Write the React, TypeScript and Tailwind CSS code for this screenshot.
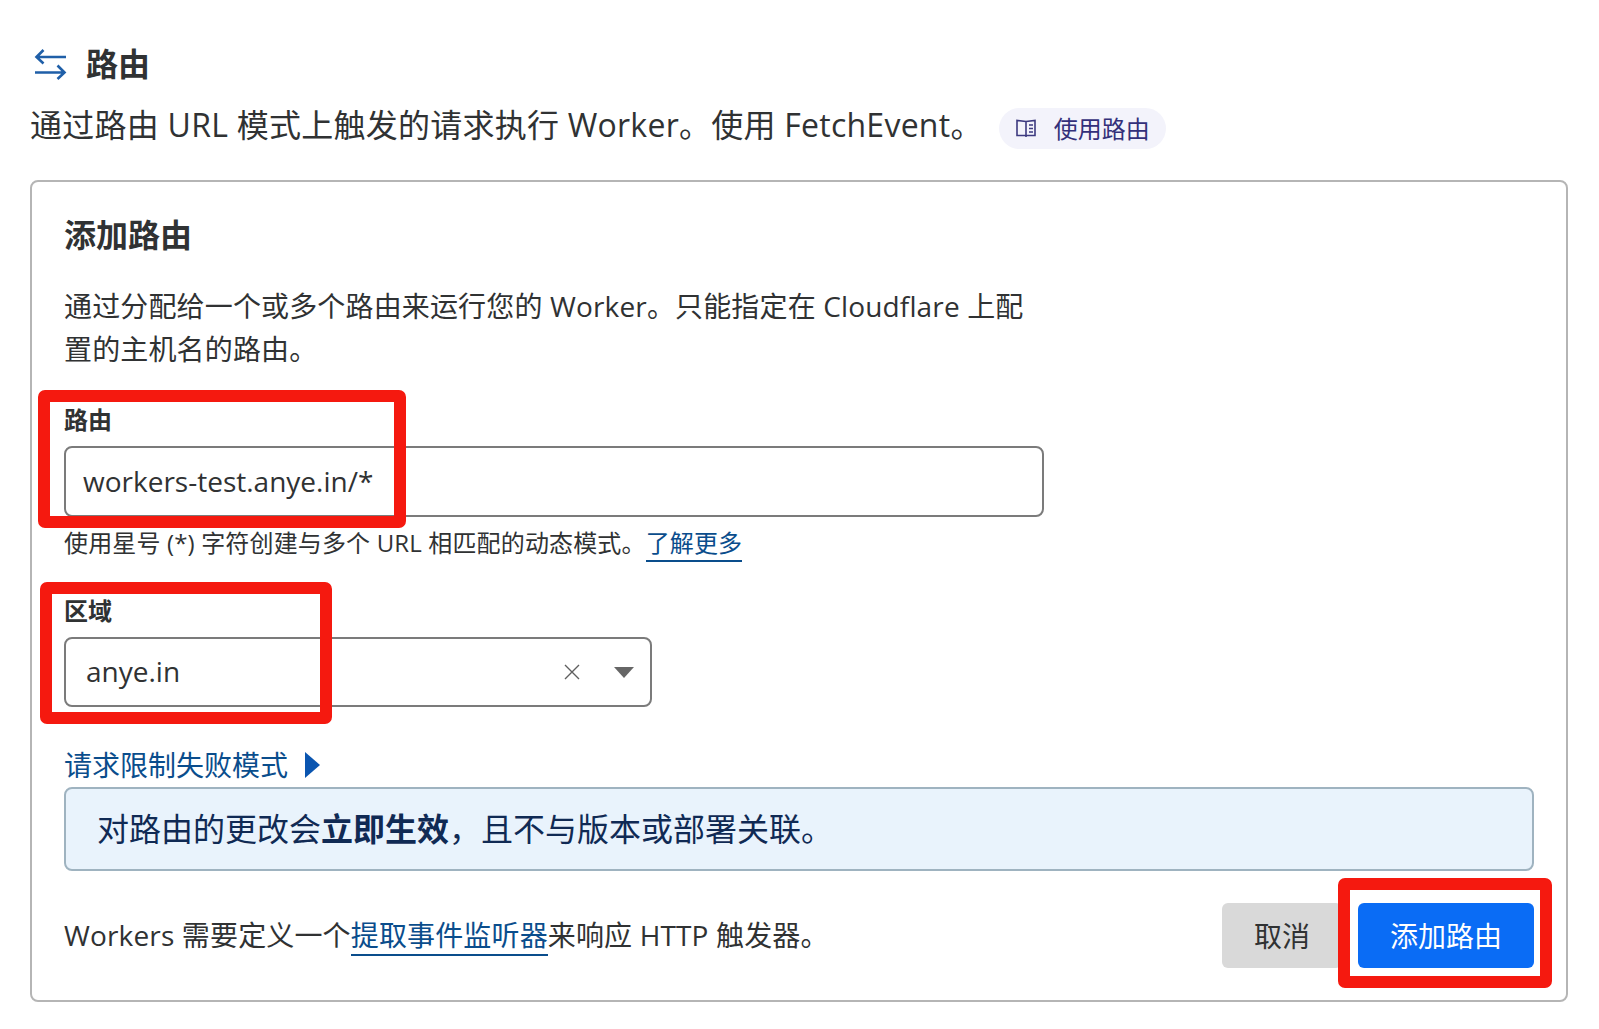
const FONT = 'font-["Open_Sans","Noto_Sans_CJK_SC",sans-serif]'

function RouteIcon() {
  return (
    <svg width="33" height="32" viewBox="0 0 33 32" fill="none" stroke="#1f5fa8" strokeWidth="2.6">
      <path d="M32 8H2.5M9.5 1L2.5 8L9.5 14.5" />
      <path d="M1 23.5H30.5M23.5 16.5L30.5 23.5L23.5 30" />
    </svg>
  )
}

function BookIcon() {
  return (
    <svg width="20" height="19" viewBox="0 0 20 19" fill="none" stroke="#3d3a80" strokeWidth="1.6">
      <path d="M10 2.5L1 1.5V16.5H10M10 2.5L19 1.5V16.5H10M10 2.5V18" />
      <path d="M13 6H17M13 9.5H17M13 13H17" />
    </svg>
  )
}

function Frame({ className }: { className: string }) {
  return <div className={`absolute rounded-[7px] border-[12px] border-[#f5190f] ${className}`} />
}

export default function App() {
  return (
    <main className={`relative h-[1029px] w-[1599px] overflow-hidden bg-white pt-[49px] pr-[31px] pl-[30px] text-[#303233] ${FONT}`}>
      <div className="flex h-[32px] items-center gap-[19px] pl-[4px]">
        <RouteIcon />
        <h2 className="pb-[2px] text-[32px] leading-[32px] font-bold">路由</h2>
      </div>

      <div className="mt-[19px] flex h-[49px] items-center">
        <p className="text-[32px] leading-[44px] tracking-[0.25px] whitespace-nowrap">通过路由 URL 模式上触发的请求执行 Worker。使用 FetchEvent。</p>
        <a className="mt-[8px] ml-[16px] flex h-[41px] items-center gap-[18px] rounded-full bg-[#f3f3fb] pr-[16px] pl-[17px] text-[24px] leading-[32px] text-[#33307a]">
          <BookIcon />
          使用路由
        </a>
      </div>

      <section className="mt-[31px] h-[822px] rounded-[8px] border-2 border-[#b5b5b5] px-[32px] pt-[31px]">
        <h3 className="text-[32px] leading-[44px] font-bold">添加路由</h3>

        <p className="mt-[28px] w-[980px] text-[28px] leading-[43px] tracking-[0.15px]">
          通过分配给一个或多个路由来运行您的 Worker。只能指定在 Cloudflare 上配置的主机名的路由。
        </p>

        <label className="mt-[33px] block text-[24px] leading-[32px] font-bold">路由</label>
        <div className="mt-[10px] flex h-[71px] w-[980px] items-center rounded-[8px] border-2 border-[#7b7b7b] pb-[2px] pl-[17px] text-[28px] leading-[40px]">
          workers-test.anye.in/*
        </div>
        <p className="mt-[7px] h-[38px] text-[24px] leading-[38px] tracking-[0.15px]">
          使用星号 (*) 字符创建与多个 URL 相匹配的动态模式。
          <a className="border-b-2 border-[#0a4d8c] pb-[1px] text-[#0a4d8c]">了解更多</a>
        </p>

        <label className="mt-[33px] block text-[24px] leading-[32px] font-bold">区域</label>
        <div className="mt-[10px] flex h-[70px] w-[588px] items-center rounded-[8px] border-2 border-[#7b7b7b] pl-[20px] text-[28px] leading-[40px]">
          <span className="flex-1 pb-[2px]">anye.in</span>
          <svg width="16" height="16" viewBox="0 0 16 16" fill="none" stroke="#5f5f5f" strokeWidth="1.4">
            <path d="M1 1L15 15M15 1L1 15" />
          </svg>
          <div className="mr-[16px] ml-[34px] h-0 w-0 border-x-[10px] border-t-[11px] border-x-transparent border-t-[#666666]" />
        </div>

        <div className="mt-[40px] flex h-[38px] items-center pb-[2px] text-[28px] leading-[38px] text-[#0a4d8c]">
          请求限制失败模式
          <div className="ml-[17px] h-0 w-0 border-y-[13px] border-l-[15px] border-y-transparent border-l-[#0a55b0]" />
        </div>

        <div className="mt-[2px] flex h-[84px] w-[1470px] items-center rounded-[8px] border-2 border-[#9fb3c0] bg-[#e9f3fc] pl-[31px] text-[32px] leading-[44px] text-[#102a54]">
          对路由的更改会<strong className="font-bold">立即生效</strong>，且不与版本或部署关联。
        </div>

        <div className="mt-[32px] flex w-[1470px] items-center">
          <p className="flex-1 pb-[2px] text-[28px] leading-[40px] tracking-[0.15px]">
            Workers 需要定义一个
            <a className="border-b-2 border-[#0a4d8c] text-[#0a4d8c]">提取事件监听器</a>
            来响应 HTTP 触发器。
          </p>
          <button className="h-[65px] w-[120px] rounded-[6px] bg-[#d9d9d9] text-[28px] leading-[40px]">取消</button>
          <button className="ml-[16px] h-[65px] w-[176px] rounded-[6px] bg-[#0a6cf5] text-[28px] leading-[40px] text-white">添加路由</button>
        </div>
      </section>

      <Frame className="top-[390px] left-[38px] h-[138px] w-[368px]" />
      <Frame className="top-[582px] left-[40px] h-[142px] w-[292px]" />
      <Frame className="top-[878px] left-[1338px] h-[110px] w-[214px]" />
    </main>
  )
}
